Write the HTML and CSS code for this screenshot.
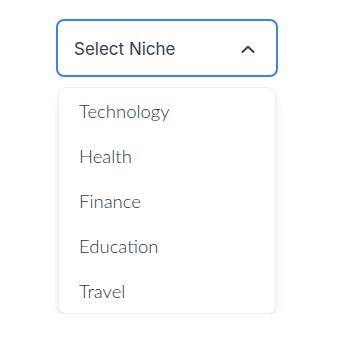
FILE: index.html
```html
<!DOCTYPE html>
<html lang="en">
<head>
<meta charset="utf-8">
<title>Select Niche</title>
<link rel="stylesheet" href="styles.css">
</head>
<body>
<div class="wrap">
  <div class="dropdown">
    <button class="trigger" type="button">
      <span class="label">Select Niche</span>
      <svg class="chev" width="16" height="10" viewBox="0 0 16 10" aria-hidden="true">
        <path d="M2.5 8 L8 2.8 L13.5 8" fill="none" stroke="#374151" stroke-width="2" stroke-linecap="round" stroke-linejoin="round"/>
      </svg>
    </button>
    <ul class="menu">
      <li class="item">Technology</li>
      <li class="item">Health</li>
      <li class="item">Finance</li>
      <li class="item">Education</li>
      <li class="item">Travel</li>
    </ul>
  </div>
</div>
</body>
</html>
```

FILE: styles.css
```css
html, body {
  margin: 0;
  padding: 0;
  background: #ffffff;
}
.wrap {
  padding: 19px 0 0 56px;
}
.dropdown {
  width: 222px;
}
.trigger {
  box-sizing: border-box;
  width: 222px;
  height: 58px;
  display: flex;
  align-items: center;
  justify-content: space-between;
  padding: 0 20px 0 16px;
  border: 2px solid #3b82f6;
  border-radius: 8px;
  background: #ffffff;
  font-family: Inter, "Open Sans", sans-serif;
  font-size: 17px;
  color: #374151;
  cursor: pointer;
}
.label {
  padding-top: 1px;
}
.chev {
  display: block;
  margin-top: 1px;
}
.menu {
  list-style: none;
  box-sizing: border-box;
  margin: 10px 2px 0 2px;
  padding: 0;
  border: 1px solid #eceef1;
  border-radius: 8px;
  background: #ffffff;
  box-shadow: 0 8px 14px -4px rgba(0,0,0,0.12), 0 3px 6px -2px rgba(0,0,0,0.06);
}
.item {
  height: 45px;
  display: flex;
  align-items: center;
  padding-left: 20px;
  font-family: Lato, "Open Sans", sans-serif;
  font-weight: 300;
  font-size: 18.5px;
  color: #2f3846;
}
```
